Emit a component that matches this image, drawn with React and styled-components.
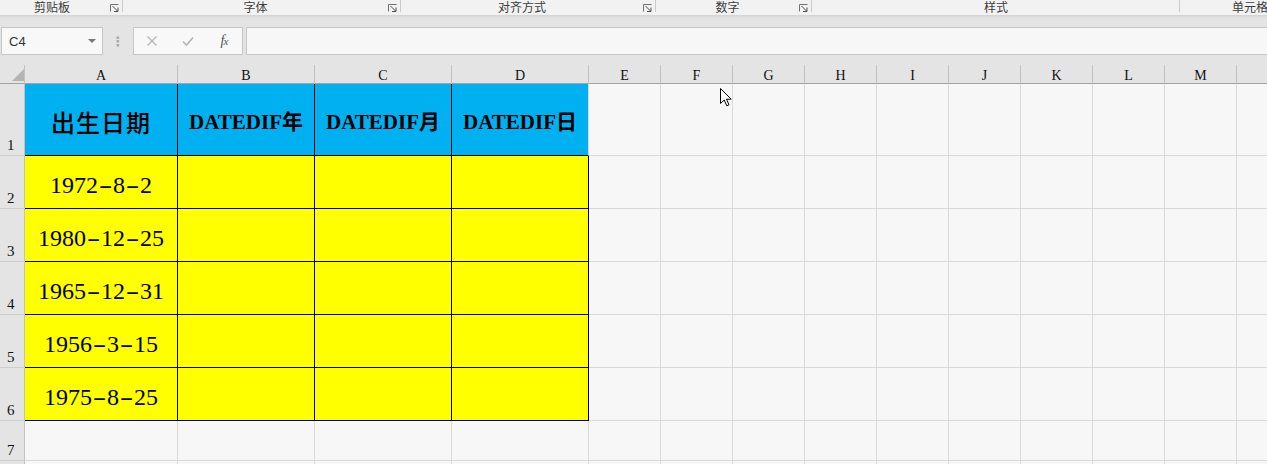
import React from 'react';
import styled, { createGlobalStyle } from 'styled-components';

const GlobalStyle = createGlobalStyle`
  html, body { margin: 0; padding: 0; background: #f7f7f7; overflow: hidden; }
  #root { width: 1267px; height: 464px; }
`;

const BLUE = '#00b0f0';
const YELLOW = '#ffff00';
const GRID = '#d9d9d9';
const BLACK = '#000000';

const Frame = styled.div`
  position: relative;
  width: 1267px;
  height: 464px;
  overflow: hidden;
  background: #f7f7f7;
  font-family: "Noto Sans CJK SC", "Liberation Sans", sans-serif;
`;

/* ---------- ribbon group labels ---------- */
const RibbonLabels = styled.div`
  display: flex;
  height: 15px;
  background: #f2f2f2;
  overflow: hidden;
`;

const Group = styled.div`
  position: relative;
  flex: 0 0 ${p => p.$w}px;
  display: flex;
  align-items: flex-start;
  &::after {
    content: '';
    position: absolute;
    right: 0;
    top: 0;
    width: 1px;
    height: 12px;
    background: #cacaca;
  }
`;

const GroupLabel = styled.div`
  flex: 1;
  text-align: center;
  font-size: 12px;
  line-height: 13px;
  padding-right: ${p => p.$pr || 0}px;
  color: #3c3c3c;
  white-space: nowrap;
`;

const Launcher = styled.svg`
  flex: 0 0 9px;
  width: 9px;
  height: 8px;
  margin: 4px 4px 0 0;
`;

const LauncherIcon = () => (
  <Launcher viewBox="0 0 9 8">
    <path d="M0.5 7.5V0.5H8.5" fill="none" stroke="#707070" />
    <path d="M2.5 2L7.5 7" fill="none" stroke="#505050" />
    <path d="M4 7.5H8V3.5" fill="none" stroke="#505050" />
  </Launcher>
);

/* ---------- formula band ---------- */
const Band = styled.div`
  height: 50px;
  box-sizing: border-box;
  padding-top: 12px;
  background: linear-gradient(#d2d2d2 0px, #dfdfdf 2px, #e4e4e4 5px, #e4e4e4 100%);
`;

const FormulaRow = styled.div`
  display: flex;
  height: 28px;
  padding-left: 1px;
`;

const NameBox = styled.div`
  flex: 0 0 102px;
  box-sizing: border-box;
  border: 1px solid #c6c6c6;
  background: #f8f8f8;
  display: flex;
  align-items: center;
  padding: 0 0 0 7px;
  font-family: "Liberation Sans", "Noto Sans", sans-serif;
  font-size: 13px;
  color: #333;
`;

const NameText = styled.span`
  flex: 1;
`;

const DropArrow = styled.span`
  width: 0;
  height: 0;
  margin-right: 6px;
  border-left: 4px solid transparent;
  border-right: 4px solid transparent;
  border-top: 4px solid #777;
`;

const Dots = styled.div`
  flex: 0 0 30px;
  display: flex;
  align-items: center;
  justify-content: center;
  color: #a8a8a8;
  font-size: 13px;
  font-weight: bold;
  font-family: "DejaVu Sans", sans-serif;
`;

const FxBox = styled.div`
  flex: 0 0 110px;
  box-sizing: border-box;
  border: 1px solid #c6c6c6;
  background: #f8f8f8;
  display: grid;
  grid-template-columns: repeat(3, 36px);
  align-items: center;
  justify-items: center;
  margin-right: 3px;
`;

const FxIcon = styled.svg`
  width: 12px;
  height: 12px;
`;

const FxText = styled.span`
  font-family: "Liberation Serif", serif;
  font-style: italic;
  font-size: 14px;
  color: #555;
  letter-spacing: -1px;
`;

const FxSub = styled.span`
  font-size: 11px;
`;

const FormulaInput = styled.div`
  flex: 1;
  border: 1px solid #c6c6c6;
  border-right: none;
  background: #f7f7f7;
`;

/* ---------- sheet ---------- */
const Sheet = styled.div`
  display: grid;
  grid-template-columns: 25px 153px 137px 137px 137px repeat(10, 72px);
  grid-template-rows: 19px 72px repeat(5, 53px) 40px 30px;
`;

const Corner = styled.div`
  box-sizing: border-box;
  background: #e4e4e4;
  border-right: 1px solid #c2c2c2;
  border-bottom: 1px solid #a3a3a3;
  display: flex;
  align-items: flex-end;
  justify-content: flex-end;
  padding: 0 0 2px 0;
`;

const CornerTriangle = styled.div`
  width: 0;
  height: 0;
  border-left: 12px solid transparent;
  border-bottom: 12px solid #b4b4b4;
`;

const ColHead = styled.div`
  box-sizing: border-box;
  background: #e4e4e4;
  border-right: 1px solid #bfbfbf;
  border-bottom: 1px solid #a3a3a3;
  text-align: center;
  font-family: "Liberation Serif", serif;
  font-size: 14px;
  line-height: 14px;
  padding-top: 4px;
  color: #111;
`;

const RowHead = styled.div`
  box-sizing: border-box;
  background: #e4e4e4;
  border-right: 1px solid #c2c2c2;
  border-bottom: 1px solid #cdcdcd;
  display: flex;
  align-items: flex-end;
  padding: 0 0 3px 7px;
  font-family: "Liberation Serif", serif;
  font-size: 15px;
  line-height: 14px;
  color: #111;
`;

const Cell = styled.div`
  box-sizing: border-box;
  background: ${p => p.$bg || '#f7f7f7'};
  border-right: 1px solid ${p => p.$r || GRID};
  border-bottom: 1px solid ${p => p.$b || GRID};
  display: flex;
  align-items: center;
  justify-content: center;
  padding-top: 5px;
  white-space: nowrap;
  color: #000;
`;

const TitleCN = styled.span`
  font-family: "Noto Sans CJK SC", sans-serif;
  font-weight: 500;
  font-size: 24px;
  line-height: 30px;
  letter-spacing: 1px;
`;

const TitleMix = styled.span`
  font-family: "Liberation Serif", "Noto Sans CJK SC", serif;
  font-weight: 700;
  font-size: 21px;
  line-height: 30px;
`;

const DateText = styled.span`
  font-family: "Liberation Serif", serif;
  font-size: 24px;
  line-height: 28px;
`;

const Dash = styled.span`
  display: inline-block;
  width: 15px;
  text-align: center;
  transform: scaleX(1.7);
`;

const Cursor = styled.svg`
  position: absolute;
  left: 720px;
  top: 88px;
  width: 12px;
  height: 19px;
`;

const groups = [
  { w: 123, label: '剪贴板', launcher: true, pr: 6 },
  { w: 278, label: '字体', launcher: true },
  { w: 255, label: '对齐方式', launcher: true },
  { w: 156, label: '数字', launcher: true },
  { w: 368, label: '样式', launcher: false },
  { w: 140, label: '单元格', launcher: false },
];

const colLetters = ['A', 'B', 'C', 'D', 'E', 'F', 'G', 'H', 'I', 'J', 'K', 'L', 'M', 'N'];

const dates = ['1972-8-2', '1980-12-25', '1965-12-31', '1956-3-15', '1975-8-25'];
const titles = ['出生日期', 'DATEDIF年', 'DATEDIF月', 'DATEDIF日'];

const renderDate = (s) => {
  const parts = s.split('-');
  const out = [];
  parts.forEach((p, i) => {
    if (i > 0) out.push(<Dash key={'d' + i}>-</Dash>);
    out.push(<React.Fragment key={'p' + i}>{p}</React.Fragment>);
  });
  return out;
};

function cellProps(row, col) {
  if (col <= 3) {
    if (row === 1) {
      return { $bg: BLUE, $r: col < 3 ? BLACK : GRID, $b: BLACK };
    }
    if (row >= 2 && row <= 6) {
      return { $bg: YELLOW, $r: BLACK, $b: BLACK };
    }
  }
  return {};
}

function cellContent(row, col) {
  if (row === 1 && col === 0) return <TitleCN>{titles[0]}</TitleCN>;
  if (row === 1 && col >= 1 && col <= 3) return <TitleMix>{titles[col]}</TitleMix>;
  if (row >= 2 && row <= 6 && col === 0) return <DateText>{renderDate(dates[row - 2])}</DateText>;
  return null;
}

export default function App() {
  const rows = [1, 2, 3, 4, 5, 6, 7, 8];
  return (
    <>
      <GlobalStyle />
      <Frame>
        <RibbonLabels>
          {groups.map(g => (
            <Group key={g.label} $w={g.w}>
              <GroupLabel $pr={g.pr}>{g.label}</GroupLabel>
              {g.launcher && <LauncherIcon />}
            </Group>
          ))}
        </RibbonLabels>

        <Band>
          <FormulaRow>
            <NameBox>
              <NameText>C4</NameText>
              <DropArrow />
            </NameBox>
            <Dots>⋮</Dots>
            <FxBox>
              <FxIcon viewBox="0 0 12 12">
                <path d="M1.5 1.5L10.5 10.5M10.5 1.5L1.5 10.5" stroke="#b5b5b5" strokeWidth="1.3" fill="none" />
              </FxIcon>
              <FxIcon viewBox="0 0 12 12">
                <path d="M1 6.5L4.5 10L11 2.5" stroke="#b5b5b5" strokeWidth="1.6" fill="none" />
              </FxIcon>
              <FxText>f<FxSub>x</FxSub></FxText>
            </FxBox>
            <FormulaInput />
          </FormulaRow>
        </Band>

        <Sheet>
          <Corner><CornerTriangle /></Corner>
          {colLetters.map(l => <ColHead key={l}>{l}</ColHead>)}
          {rows.map(r => (
            <React.Fragment key={r}>
              <RowHead>{r}</RowHead>
              {colLetters.map((l, c) => (
                <Cell key={l + r} {...cellProps(r, c)}>
                  {cellContent(r, c)}
                </Cell>
              ))}
            </React.Fragment>
          ))}
        </Sheet>

        <Cursor viewBox="0 0 12 19">
          <path d="M0.5 0.5V15.5L4.2 12L6.8 17.8L9 16.8L6.5 11.2H11.2Z" fill="#fff" stroke="#000" strokeWidth="1" strokeLinejoin="miter" />
        </Cursor>
      </Frame>
    </>
  );
}
